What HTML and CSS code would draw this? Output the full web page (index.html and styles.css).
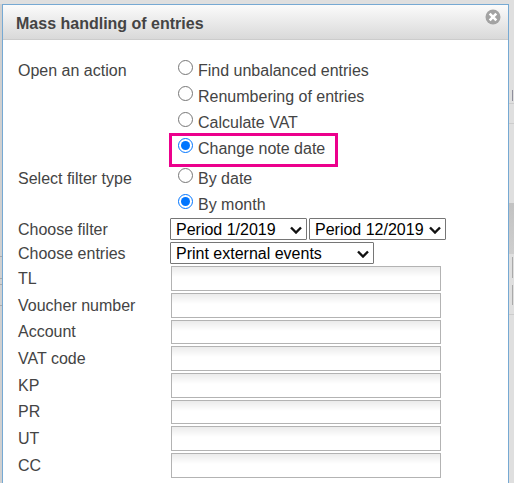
FILE: index.html
```
<!DOCTYPE html>
<html lang="en">
<head>
  <meta charset="utf-8">
  <title>Mass handling of entries</title>
  <link rel="stylesheet" href="styles.css">
</head>
<body>
  <div class="dialog">
    <div class="dialog-header">
      <h1>Mass handling of entries</h1>
      <button type="button" class="close-button" aria-label="Close">
        <svg width="16" height="16" viewBox="0 0 16 16">
          <circle cx="8" cy="8" r="7.5" fill="#a3a3a3"/>
          <path d="M4.7 4.7l6.6 6.6M11.3 4.7l-6.6 6.6" stroke="#fff" stroke-width="2.6"/>
        </svg>
      </button>
    </div>

    <form class="dialog-form">
      <div class="form-row" role="radiogroup" aria-labelledby="action-label">
        <span class="row-label" id="action-label">Open an action</span>
        <div class="radio-list action-list">
          <label class="radio"><input type="radio" name="action"> Find unbalanced entries</label>
          <label class="radio"><input type="radio" name="action"> Renumbering of entries</label>
          <label class="radio"><input type="radio" name="action"> Calculate VAT</label>
          <label class="radio highlight"><input type="radio" name="action" checked> Change note date</label>
        </div>
      </div>

      <div class="form-row" role="radiogroup" aria-labelledby="filter-type-label">
        <span class="row-label" id="filter-type-label">Select filter type</span>
        <div class="radio-list">
          <label class="radio"><input type="radio" name="filter-type"> By date</label>
          <label class="radio"><input type="radio" name="filter-type" checked> By month</label>
        </div>
      </div>

      <div class="form-row select-row">
        <label for="period-from">Choose filter</label>
        <div class="selects">
          <span class="select period"><select id="period-from"><option>Period 1/2019</option></select><svg viewBox="0 0 12 8"><path d="M1 1.5l5 5 5-5"/></svg></span>
          <span class="select period"><select id="period-to" aria-label="Last period"><option>Period 12/2019</option></select><svg viewBox="0 0 12 8"><path d="M1 1.5l5 5 5-5"/></svg></span>
        </div>
      </div>

      <div class="form-row select-row">
        <label for="entries">Choose entries</label>
        <div class="selects">
          <span class="select entries"><select id="entries"><option>Print external events</option></select><svg viewBox="0 0 12 8"><path d="M1 1.5l5 5 5-5"/></svg></span>
        </div>
      </div>

      <div class="form-row text-row">
        <label for="tl">TL</label>
        <input type="text" id="tl">
      </div>
      <div class="form-row text-row">
        <label for="voucher">Voucher number</label>
        <input type="text" id="voucher">
      </div>
      <div class="form-row text-row">
        <label for="account">Account</label>
        <input type="text" id="account">
      </div>
      <div class="form-row text-row">
        <label for="vat-code">VAT code</label>
        <input type="text" id="vat-code">
      </div>
      <div class="form-row text-row">
        <label for="kp">KP</label>
        <input type="text" id="kp">
      </div>
      <div class="form-row text-row">
        <label for="pr">PR</label>
        <input type="text" id="pr">
      </div>
      <div class="form-row text-row">
        <label for="ut">UT</label>
        <input type="text" id="ut">
      </div>
      <div class="form-row text-row">
        <label for="cc">CC</label>
        <input type="text" id="cc">
      </div>
    </form>
  </div>
</body>
</html>
```
FILE: styles.css
```
* {
  box-sizing: border-box;
}

body {
  margin: 0;
  min-height: 100vh;
  display: flex;
  padding: 4px 5px 0 2px;
  overflow: hidden;
  font-family: Arial, "Liberation Sans", sans-serif;
  font-size: 16px;
  line-height: 20px;
  color: #444;
  /* Dimmed page behind the dialog: field edges, toolbar band, rules */
  background:
    linear-gradient(#aaa, #aaa) right 1px top 257px / 1px 21px no-repeat,
    linear-gradient(#aaa, #aaa) right 1px top 285px / 1px 20px no-repeat,
    linear-gradient(#8f8f9c, #8f8f9c) right 1px top 90px / 1px 11px no-repeat,
    linear-gradient(#c2c2c2, #cecece) right top 203px / 5px 51px no-repeat,
    linear-gradient(#ccc, #ccc) right top 103px / 5px 1px no-repeat,
    linear-gradient(#ccc, #ccc) right top 123px / 5px 1px no-repeat,
    linear-gradient(#ccc, #ccc) right top 314px / 5px 1px no-repeat,
    linear-gradient(#aaa, #aaa) left top 256px / 2px 1px no-repeat,
    linear-gradient(#aaa, #aaa) left top 278px / 2px 1px no-repeat,
    linear-gradient(#aaa, #aaa) left top 284px / 2px 1px no-repeat,
    linear-gradient(#aaa, #aaa) left top 305px / 2px 1px no-repeat,
    linear-gradient(#d0d0d0, #d0d0d0) left top 4px / 2px 100% no-repeat,
    #dfdfdf;
}

.dialog {
  flex: 1;
  background: #fff;
  border: 1px solid #76a9d3;
  border-bottom: none;
}

.dialog-header {
  display: flex;
  align-items: flex-start;
  justify-content: space-between;
  height: 35px;
  padding: 4px 7px 0 13px;
  border-bottom: 1px solid #ccc;
  background: linear-gradient(#fbfbfb, #d9d9d9);
}

.dialog-header h1 {
  margin: 5px 0 0;
  font-size: 16px;
  line-height: 20px;
}

.close-button {
  display: flex;
  padding: 0;
  border: none;
  background: none;
  cursor: pointer;
}

.dialog-form {
  padding: 17px 15px 0;
}

.form-row {
  display: grid;
  grid-template-columns: 152px 1fr;
}

.row-label {
  padding-top: 4px;
}

.radio-list {
  padding-bottom: 1px;
}

.action-list {
  padding-bottom: 4px;
}

.radio {
  position: relative;
  display: flex;
  align-items: center;
  gap: 5px;
  width: fit-content;
  height: 26px;
  padding: 2px 0 0 8px;
}

.radio input {
  width: 15px;
  height: 15px;
  margin: 0 0 7px;
  accent-color: #0075ff;
}

.highlight::after {
  content: "";
  position: absolute;
  top: -2px;
  right: -13px;
  bottom: -6px;
  left: -1px;
  border: 3px solid #ec008c;
}

.select-row {
  align-items: center;
  margin-bottom: 2px;
}

.select-row > label {
  padding-top: 2px;
}

.selects {
  display: flex;
  gap: 2px;
}

.select {
  position: relative;
  display: flex;
}

.period {
  width: 137px;
}

.entries {
  width: 204px;
}

select {
  appearance: none;
  width: 100%;
  height: 22px;
  padding: 1px 5px 0;
  border: 1px solid #767676;
  border-radius: 1px;
  background: #fff;
  color: #000;
  font: inherit;
}

/* Arrow lies over the select */
.select svg {
  position: absolute;
  top: 8px;
  right: 5px;
  width: 12px;
  height: 8px;
  fill: none;
  stroke: #111;
  stroke-width: 2.4;
  pointer-events: none;
}

.text-row {
  align-items: center;
  margin-bottom: 2px;
}

.text-row input {
  width: 270px;
  height: 25px;
  margin-left: 1px;
  padding: 0 4px;
  border: 1px solid #b3b3b3;
  background: linear-gradient(#ebebeb, #fff 10px);
  font: inherit;
}

.text-row:nth-child(3n+1) input {
  height: 24px;
}
```
